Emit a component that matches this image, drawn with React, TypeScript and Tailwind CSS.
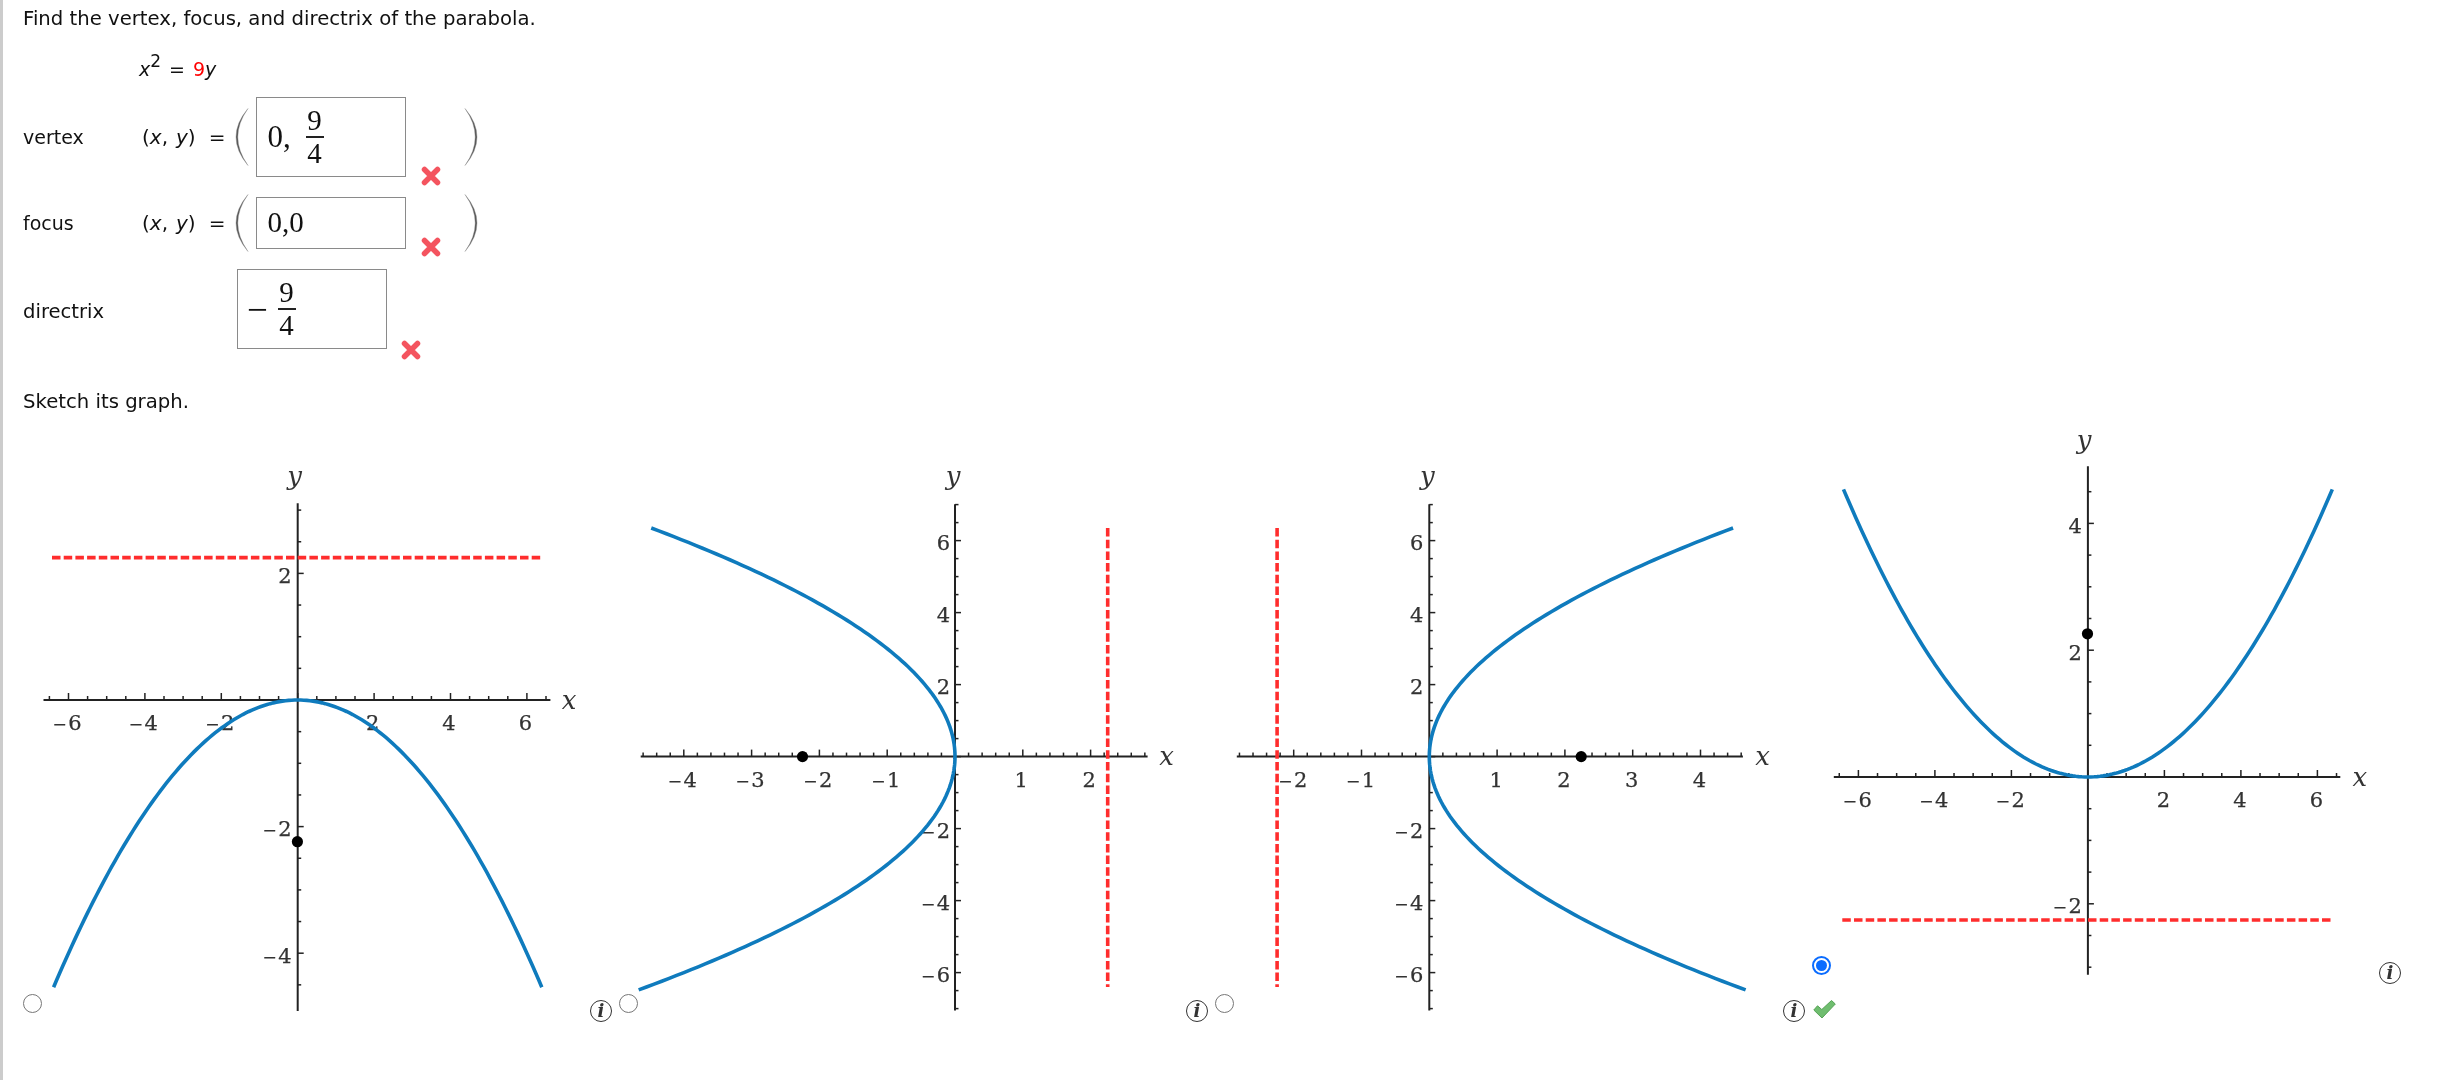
import React from "react";

const BLUE = "#0f7bbd";
const RED = "#ff2d2d";

type GraphProps = {
  x0: number;
  width: number;
  ox: number;
  oy: number;
  ux: number;
  uy: number;
  axisX: [number, number];
  axisY: [number, number];
  xMinor: number;
  xMajor: number;
  xRange: [number, number];
  yRange: [number, number];
  xLabels: number[];
  yLabels: number[];
  xLabelY: number;
  xLabelDx: number;
  yLabelDx: number;
  curve: [number, number][];
  directrix: [number, number, number, number];
  focus: [number, number];
  xPos: [number, number];
  yPos: [number, number];
};

const Y0 = 432;
const H = 590;

function range(a: number, b: number, step: number) {
  const out: number[] = [];
  const n = Math.round((b - a) / step);
  for (let i = 0; i <= n; i++) out.push(a + i * step);
  return out;
}

function isMajor(v: number, m: number) {
  return Math.abs(v / m - Math.round(v / m)) < 1e-6;
}

function TickText({ v, x, y, anchor }: { v: number; x: number; y: number; anchor: "middle" | "end" }) {
  return (
    <text
      x={x}
      y={y}
      textAnchor={anchor}
      fontFamily="'DejaVu Serif', serif"
      fontSize={21}
      fill="#333"
      stroke="#333"
      strokeWidth={0.25}
    >
      {v < 0 ? (
        <>
          <tspan fontSize={17}>{"\u2212"}</tspan>
          <tspan dx={1.5}>{Math.abs(v)}</tspan>
        </>
      ) : (
        String(v)
      )}
    </text>
  );
}

function Graph(p: GraphProps) {
  const pts = p.curve.map(([x, y]) => `${(p.ox + x * p.ux).toFixed(2)},${(p.oy - y * p.uy).toFixed(2)}`).join(" ");
  return (
    <svg
      width={p.width}
      height={H}
      viewBox={`${p.x0} ${Y0} ${p.width} ${H}`}
      className="shrink-0 overflow-visible"
    >
      <line x1={p.axisX[0]} x2={p.axisX[1]} y1={p.oy} y2={p.oy} stroke="#222" strokeWidth={2} />
      <line x1={p.ox} x2={p.ox} y1={p.axisY[0]} y2={p.axisY[1]} stroke="#222" strokeWidth={2} />
      {range(p.xRange[0], p.xRange[1], p.xMinor).map((v) => {
        const x = p.ox + v * p.ux;
        return <line key={v} x1={x} x2={x} y1={p.oy} y2={p.oy - (isMajor(v, p.xMajor) ? 7 : 4)} stroke="#222" strokeWidth={1.5} />;
      })}
      {range(p.yRange[0], p.yRange[1], 0.5).map((v) => {
        const y = p.oy - v * p.uy;
        return <line key={v} x1={p.ox} x2={p.ox + (isMajor(v, 2) ? 6 : 3.5)} y1={y} y2={y} stroke="#222" strokeWidth={1.5} />;
      })}
      {p.xLabels.map((v) => (
        <TickText key={v} v={v} x={p.ox + v * p.ux + p.xLabelDx} y={p.xLabelY + 7.6} anchor="middle" />
      ))}
      {p.yLabels.map((v) => (
        <TickText key={v} v={v} x={p.ox + p.yLabelDx} y={p.oy - v * p.uy + 2 + 7.6} anchor="end" />
      ))}
      <polyline points={pts} fill="none" stroke={BLUE} strokeWidth={3.6} />
      <line
        x1={p.directrix[0]}
        y1={p.directrix[1]}
        x2={p.directrix[2]}
        y2={p.directrix[3]}
        stroke={RED}
        strokeWidth={3.6}
        strokeDasharray="8.5 3.2"
      />
      <circle cx={p.focus[0]} cy={p.focus[1]} r={5.6} fill="#000" />
      <text
        x={p.xPos[0]}
        y={p.xPos[1] + 6.5}
        textAnchor="middle"
        fontFamily="'DejaVu Serif', serif"
        fontStyle="italic"
        fontSize={26}
        fill="#333"
      >
        x
      </text>
      <text
        x={p.yPos[0]}
        y={p.yPos[1] + 4}
        textAnchor="middle"
        fontFamily="'DejaVu Serif', serif"
        fontStyle="italic"
        fontSize={26}
        fill="#333"
      >
        y
      </text>
    </svg>
  );
}

function Radio({ top }: { top: string }) {
  return <div className={`${top} h-[19px] w-[19px] shrink-0 rounded-full border-[1.5px] border-[#777] bg-white`} />;
}

function Info({ top }: { top: string }) {
  return (
    <div className={`${top} flex h-[22px] w-[22px] shrink-0 items-center justify-center rounded-full border border-[#333] bg-white`}>
      <span className="font-['DejaVu_Serif',serif] text-[18px] font-bold italic leading-none text-[#333]">i</span>
    </div>
  );
}

function Paren({ right }: { right?: boolean }) {
  return (
    <svg width={14} height={58} viewBox="0 0 14 58" className={`shrink-0 ${right ? "-scale-x-100" : ""}`}>
      <path d="M13 0.5 Q-11 29 13 57.5 Q-7.4 29 13 0.5 Z" fill="#555" stroke="#888" strokeWidth={0.4} />
    </svg>
  );
}

function RedX({ cls }: { cls: string }) {
  return (
    <svg width={20} height={20} viewBox="0 0 20 20" className={`shrink-0 ${cls}`}>
      <path d="M3.5 3.5 L16.5 16.5 M16.5 3.5 L3.5 16.5" stroke="#f4545f" strokeWidth={5.5} strokeLinecap="round" fill="none" />
    </svg>
  );
}

function Frac() {
  return (
    <div className="flex w-[18px] shrink-0 flex-col items-center font-['Liberation_Serif',serif] text-[29px] leading-[31px] text-[#111]">
      <span>9</span>
      <span className="h-[1.5px] w-full bg-[#222]" />
      <span>4</span>
    </div>
  );
}

function XY() {
  return (
    <div className="ml-[3px] flex w-[92px] shrink-0 items-center text-[20px]">
      <span>(</span>
      <span className="italic">x</span>
      <span className="mr-[8px]">,</span>
      <span className="italic">y</span>
      <span>)</span>
      <span className="ml-[13px]">=</span>
    </div>
  );
}

function para(a: number, b: number, f: (t: number) => [number, number]) {
  const out: [number, number][] = [];
  for (let i = 0; i <= 160; i++) out.push(f(a + ((b - a) * i) / 160));
  return out;
}

const evens = [-6, -4, -2, 2, 4, 6];
const units = [-4, -3, -2, -1, 1, 2];

export default function App() {
  return (
    <div className="min-h-screen w-full border-l-[3px] border-l-[#cccccc] bg-white pl-[20px] font-['DejaVu_Sans',sans-serif] text-[#111] blur-[0.4px]">
      <div className="flex h-[37px] items-center text-[19.66px]">Find the vertex, focus, and directrix of the parabola.</div>

      <div className="mt-[17px] flex h-[30px] items-center pl-[116px] text-[19px]">
        <span className="italic">x</span>
        <span className="relative -top-[7px] text-[17px]">2</span>
        <span className="ml-[8px]">=</span>
        <span className="ml-[8px] text-[#ff0000]">9</span>
        <span className="italic">y</span>
      </div>

      <div className="mt-[13px] flex h-[80px] items-center text-[19px]">
        <div className="w-[116px] shrink-0">vertex</div>
        <XY />
        <div className="ml-[1px] mr-[7px]"><Paren /></div>
        <div className="flex h-[80px] w-[150px] shrink-0 items-center border-[1.5px] border-[#8a8a8a] pl-[10.5px] font-['Liberation_Serif',serif] text-[31px]">
          <span className="w-[21px]">0,</span>
          <div className="ml-[17px]"><Frac /></div>
        </div>
        <RedX cls="ml-[15px] self-end -mb-[9px]" />
        <div className="ml-[23px]"><Paren right /></div>
      </div>

      <div className="mt-[20px] flex h-[52px] items-center text-[19px]">
        <div className="w-[116px] shrink-0">focus</div>
        <XY />
        <div className="ml-[1px] mr-[7px]"><Paren /></div>
        <div className="flex h-[52px] w-[150px] shrink-0 items-center border-[1.5px] border-[#8a8a8a] pl-[10.5px] font-['Liberation_Serif',serif] text-[29px]">
          0,0
        </div>
        <RedX cls="ml-[15px] self-end -mb-[8px]" />
        <div className="ml-[23px]"><Paren right /></div>
      </div>

      <div className="mt-[20px] flex h-[80px] items-center text-[19px]">
        <div className="relative top-[3px] w-[214px] shrink-0 text-[19.6px]">directrix</div>
        <div className="flex h-[80px] w-[150px] shrink-0 items-center border-[1.5px] border-[#8a8a8a] pl-[9px] font-['Liberation_Serif',serif] text-[37px]">
          <span className="w-[21px] leading-none">−</span>
          <div className="ml-[9.5px]"><Frac /></div>
        </div>
        <RedX cls="ml-[14px] self-end -mb-[11px]" />
      </div>

      <div className="mt-[39px] flex h-[28px] items-center text-[19.66px]">Sketch its graph.</div>

      <div className="mt-[16px] flex items-start">
        <Radio top="mt-[562px]" />
        <Graph
          x0={42}
          width={548}
          ox={297.7}
          oy={700}
          ux={38.2}
          uy={63.3}
          axisX={[43.5, 550.4]}
          axisY={[503.3, 1011]}
          xMinor={0.5}
          xMajor={2}
          xRange={[-6.5, 6.5]}
          yRange={[-4.5, 3]}
          xLabels={evens}
          yLabels={[2, -2, -4]}
          xLabelY={722}
          xLabelDx={-1.5}
          yLabelDx={-6}
          curve={para(-6.39, 6.39, (t) => [t, (-t * t) / 9])}
          directrix={[52, 557.6, 541.7, 557.6]}
          focus={[297.4, 841.7]}
          xPos={[569, 702]}
          yPos={[294.6, 481]}
        />
        <Info top="mt-[567.5px]" />

        <div className="ml-[7px]"><Radio top="mt-[562px]" /></div>
        <Graph
          x0={638}
          width={548}
          ox={955}
          oy={756.6}
          ux={67.8}
          uy={36}
          axisX={[640.7, 1147.6]}
          axisY={[504.3, 1010.4]}
          xMinor={0.2}
          xMajor={1}
          xRange={[-4.6, 2.8]}
          yRange={[-7, 7]}
          xLabels={units}
          yLabels={evens}
          xLabelY={779.5}
          xLabelDx={-1.5}
          yLabelDx={-5}
          curve={para(6.35, -6.48, (t) => [(-t * t) / 9, t])}
          directrix={[1107.7, 528, 1107.7, 987]}
          focus={[802.5, 756.6]}
          xPos={[1166.6, 758.5]}
          yPos={[953, 480.6]}
        />
        <Info top="mt-[567.5px]" />

        <div className="ml-[7px]"><Radio top="mt-[562px]" /></div>
        <Graph
          x0={1234}
          width={549}
          ox={1429.3}
          oy={756.6}
          ux={67.8}
          uy={36}
          axisX={[1236.8, 1742.9]}
          axisY={[504.3, 1010.4]}
          xMinor={0.2}
          xMajor={1}
          xRange={[-2.8, 4.6]}
          yRange={[-7, 7]}
          xLabels={[-2, -1, 1, 2, 3, 4]}
          yLabels={evens}
          xLabelY={779.5}
          xLabelDx={-1}
          yLabelDx={-6}
          curve={para(6.35, -6.48, (t) => [(t * t) / 9, t])}
          directrix={[1277.1, 528, 1277.1, 987]}
          focus={[1581.2, 756.6]}
          xPos={[1762.7, 758.5]}
          yPos={[1427.4, 480.6]}
        />
        <Info top="mt-[567.5px]" />

        <div className="ml-[7px] flex w-[19px] shrink-0 flex-col items-start">
          <div className="mt-[524px] flex h-[19px] w-[19px] shrink-0 items-center justify-center rounded-full border-2 border-[#0a6cff] bg-white">
            <div className="h-[11px] w-[11px] rounded-full bg-[#0a6cff]" />
          </div>
          <svg width={23} height={18} viewBox="0 0 23 18" className="ml-[1px] mt-[25px] shrink-0 overflow-visible">
            <path d="M0.8 10 L4.5 5.8 L8.8 9.5 L18.5 0.5 L22.3 4 L9 18 Z" fill="#6fbd6f" stroke="#55a355" strokeWidth={1} />
          </svg>
        </div>
        <Graph
          x0={1831}
          width={548}
          ox={2087.9}
          oy={777}
          ux={38.25}
          uy={63.4}
          axisX={[1833.8, 2340.3]}
          axisY={[466.3, 974.7]}
          xMinor={0.5}
          xMajor={2}
          xRange={[-6.5, 6.5]}
          yRange={[-3, 4.5]}
          xLabels={evens}
          yLabels={[4, 2, -2]}
          xLabelY={799.6}
          xLabelDx={-1}
          yLabelDx={-6}
          curve={para(-6.39, 6.39, (t) => [t, (t * t) / 9])}
          directrix={[1842.3, 920, 2331.9, 920]}
          focus={[2087.5, 633.8]}
          xPos={[2359.8, 779]}
          yPos={[2084, 445]}
        />
        <Info top="mt-[530px]" />
      </div>
    </div>
  );
}
